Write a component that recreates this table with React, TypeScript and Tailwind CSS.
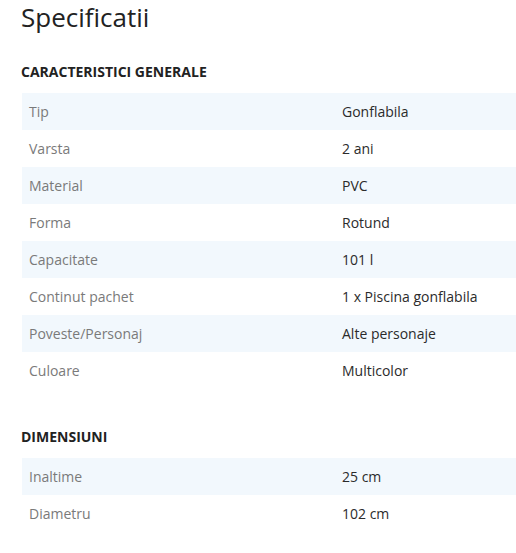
import React from "react";

const general: [string, string][] = [
  ["Tip", "Gonflabila"],
  ["Varsta", "2 ani"],
  ["Material", "PVC"],
  ["Forma", "Rotund"],
  ["Capacitate", "101 l"],
  ["Continut pachet", "1 x Piscina gonflabila"],
  ["Poveste/Personaj", "Alte personaje"],
  ["Culoare", "Multicolor"],
];

const dims: [string, string][] = [
  ["Inaltime", "25 cm"],
  ["Diametru", "102 cm"],
];

function Table({ rows }: { rows: [string, string][] }) {
  return (
    <div className="flex flex-col ml-[22px]">
      {rows.map(([k, v], i) => (
        <div
          key={k}
          className={`flex h-[37px] items-center pb-[1px] text-[14px] ${i % 2 === 0 ? "bg-[#f2f8fd]" : "bg-white"}`}
        >
          <div className="w-[320px] pl-[7px] text-[#7a7a7a]">{k}</div>
          <div className="text-[#2b2b2b]">{v}</div>
        </div>
      ))}
    </div>
  );
}

export default function App() {
  return (
    <div
      className="w-[516px] h-[553px] bg-white overflow-hidden"
      style={{ fontFamily: '"Open Sans", sans-serif' }}
    >
      <h1 className="pl-[21px] pt-[1px] text-[26px] leading-[32px] text-[#222]">Specificatii</h1>
      <h2 className="pl-[21px] mt-[29px] text-[14px] leading-[20px] font-bold text-[#222]">
        CARACTERISTICI GENERALE
      </h2>
      <div className="mt-[11px]">
        <Table rows={general} />
      </div>
      <h2 className="pl-[21px] mt-[38px] text-[14px] leading-[20px] font-bold text-[#222]">
        DIMENSIUNI
      </h2>
      <div className="mt-[11px]">
        <Table rows={dims} />
      </div>
    </div>
  );
}
